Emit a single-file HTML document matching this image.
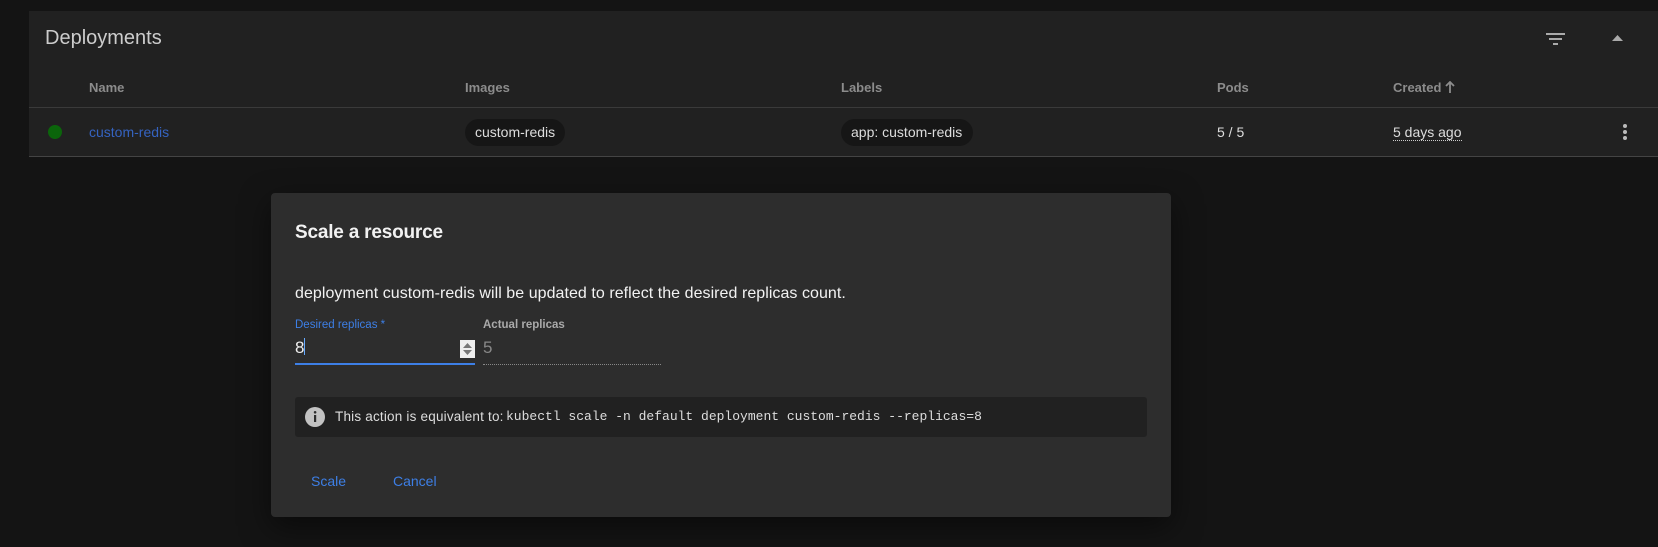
<!DOCTYPE html>
<html><head><meta charset="utf-8"><style>
*{box-sizing:border-box;margin:0;padding:0}
body{width:1658px;height:547px;background:#141414;font-family:"Liberation Sans",sans-serif;position:relative;overflow:hidden}
.a{position:absolute;white-space:nowrap}
.card{position:absolute;left:29px;top:11px;width:1629px;height:146px;background:#212121}
.hd{color:#8c8c8c;font-size:13px;font-weight:bold;top:80px}
.line{position:absolute;left:29px;width:1629px;height:1px;background:#3a3a3a}
.chip{position:absolute;top:119px;height:27px;border-radius:14px;background:#161616;color:#ddd;font-size:14px;line-height:27px;padding:0 10px}
.dlg{position:absolute;left:271px;top:193px;width:900px;height:324px;background:#2d2d2d;border-radius:4px;box-shadow:0 10px 30px rgba(0,0,0,.5)}
</style></head><body>
<div class="card"></div>
<div class="a" style="left:45px;top:27px;font-size:20px;color:#ccc">Deployments</div>
<svg class="a" style="left:1546px;top:32px" width="22" height="14"><rect x="0" y="1" width="19" height="2" fill="#aaa"/><rect x="3" y="6" width="13" height="2" fill="#aaa"/><rect x="7" y="11" width="5" height="2" fill="#aaa"/></svg>
<svg class="a" style="left:1612px;top:35px" width="11" height="6"><path d="M0 6 L5.5 0 L11 6Z" fill="#aaa"/></svg>
<div class="a hd" style="left:89px">Name</div>
<div class="a hd" style="left:465px">Images</div>
<div class="a hd" style="left:841px">Labels</div>
<div class="a hd" style="left:1217px">Pods</div>
<div class="a hd" style="left:1393px">Created <svg width="10" height="12" style="vertical-align:-1px"><path d="M5 1 V12 M1 5 L5 1 L9 5" stroke="#8c8c8c" stroke-width="1.8" fill="none"/></svg></div>
<div class="line" style="top:107px"></div>
<div class="a" style="left:48px;top:125px;width:14px;height:14px;border-radius:50%;background:#0b650b"></div>
<div class="a" style="left:89px;top:124px;font-size:14px;color:#3563c0">custom-redis</div>
<div class="chip" style="left:465px">custom-redis</div>
<div class="chip" style="left:841px;width:132px">app: custom-redis</div>
<div class="a" style="left:1217px;top:124px;font-size:14px;color:#ddd">5 / 5</div>
<div class="a" style="left:1393px;top:124px;font-size:14px;color:#ddd;border-bottom:1px dotted #ccc;line-height:16px">5 days ago</div>
<svg class="a" style="left:1622px;top:123px" width="6" height="18"><circle cx="3" cy="3" r="2" fill="#bbb"/><circle cx="3" cy="9" r="2" fill="#bbb"/><circle cx="3" cy="15" r="2" fill="#bbb"/></svg>
<div class="line" style="top:156px;background:#444"></div>

<div class="dlg"></div>
<div class="a" style="left:295px;top:222px;font-size:19px;font-weight:bold;color:#f2f2f2;letter-spacing:-0.2px">Scale a resource</div>
<div class="a" style="left:295px;top:285px;font-size:16px;color:#f2f2f2;letter-spacing:0.05px">deployment custom-redis will be updated to reflect the desired replicas count.</div>
<div class="a" style="left:295px;top:319px;font-size:11.5px;color:#3d7fe6">Desired replicas *</div>
<div class="a" style="left:295px;top:338px;font-size:17px;color:#eee">8<span style="display:inline-block;width:1px;height:17px;background:#6af;vertical-align:-2px"></span></div>
<svg class="a" style="left:460px;top:340px" width="15" height="18"><rect width="15" height="18" fill="#eee"/><path d="M3 8 L7.5 3 L12 8Z M3 10 L7.5 15 L12 10Z" fill="#777"/></svg>
<div class="a" style="left:295px;top:363px;width:180px;height:2px;background:#3d7fe6"></div>
<div class="a" style="left:483px;top:319px;font-size:11.5px;font-weight:bold;color:#aaa">Actual replicas</div>
<div class="a" style="left:483px;top:338px;font-size:17px;color:#888">5</div>
<div class="a" style="left:483px;top:364px;width:178px;border-bottom:1px dotted #888"></div>
<div class="a" style="left:295px;top:397px;width:852px;height:40px;background:#212121;border-radius:3px"></div>
<svg class="a" style="left:304px;top:406px" width="22" height="22"><circle cx="11" cy="11" r="10" fill="#c2c2c2"/><rect x="10" y="9" width="2.2" height="7" fill="#2d2d2d"/><circle cx="11.1" cy="6.3" r="1.3" fill="#2d2d2d"/></svg>
<div class="a" style="left:335px;top:409px;font-size:13.5px;color:#ddd;letter-spacing:0.2px">This action is equivalent to:</div>
<div class="a" style="left:506px;top:409px;font-size:13px;font-family:'Liberation Mono',monospace;color:#ddd;letter-spacing:0px">kubectl scale -n default deployment custom-redis --replicas=8</div>
<div class="a" style="left:311px;top:473px;font-size:14px;color:#3d7fe6">Scale</div>
<div class="a" style="left:393px;top:473px;font-size:14px;color:#3d7fe6">Cancel</div>
</body></html>
